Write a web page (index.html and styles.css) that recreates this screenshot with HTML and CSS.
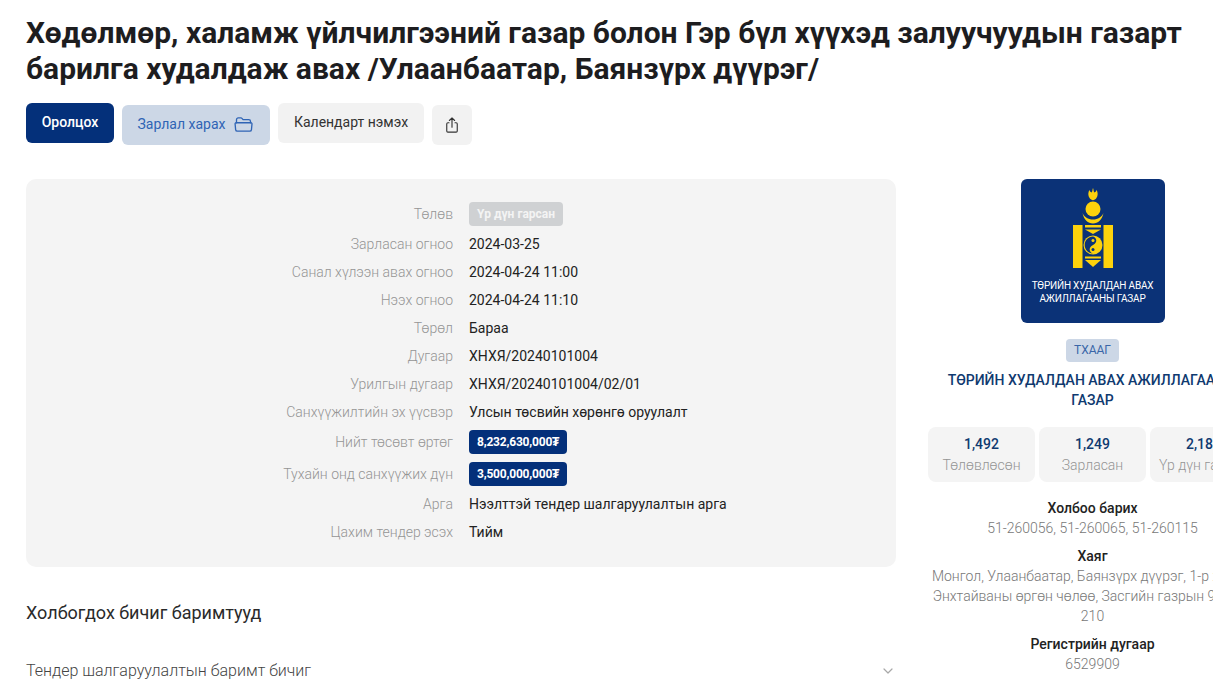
FILE: index.html
```html
<!DOCTYPE html>
<html lang="mn">
<head>
    <meta charset="UTF-8">
    <meta name="viewport" content="width=device-width, initial-scale=1.0">
    <title>Тендер</title>
    <link rel="stylesheet" href="styles.css">
</head>
<body>

<div class="page">
    <h1 class="title">Хөдөлмөр, халамж үйлчилгээний газар болон Гэр бүл хүүхэд залуучуудын газарт барилга худалдаж авах /Улаанбаатар, Баянзүрх дүүрэг/</h1>

    <div class="actions">
        <button class="btn btn-primary">Оролцох</button>
        <button class="btn btn-light low">
            Зарлал харах
            <svg class="btn-icon" viewBox="0 0 24 24" fill="none" stroke="currentColor" stroke-width="1.5" stroke-linecap="round" stroke-linejoin="round">
                <path d="M4 10V6.500A2 2 0 0 1 6 4.500h3.100a1.500 1.500 0 0 1 1.100.5l1.300 1.500H18a2 2 0 0 1 2 2V10"/>
                <path d="M3.500 10h17a1.200 1.200 0 0 1 1.200 1.300l-.6 6.500a2 2 0 0 1-2 1.800H5a2 2 0 0 1-2-1.800l-.6-6.500A1.200 1.200 0 0 1 3.500 10z"/>
            </svg>
        </button>
        <button class="btn btn-grey">Календарт нэмэх</button>
        <button class="btn btn-grey btn-square low">
            <svg class="share-icon" viewBox="0 0 24 24" fill="none" stroke="currentColor" stroke-width="1.5" stroke-linecap="round" stroke-linejoin="round">
                <path d="M8 9H6.500A1.500 1.500 0 0 0 5 10.500V20a1.500 1.500 0 0 0 1.500 1.500h11A1.500 1.500 0 0 0 19 20v-9.500A1.500 1.500 0 0 0 17.500 9H16"/>
                <path d="M12 15V2.500M8.500 6L12 2.500 15.500 6"/>
            </svg>
        </button>
    </div>

    <div class="columns">
        <div class="main">
            <div class="info-card">
                <div class="info-row tall"><span class="info-label">Төлөв</span><span class="badge badge-grey">Үр дүн гарсан</span></div>
                <div class="info-row"><span class="info-label">Зарласан огноо</span><span class="info-value">2024-03-25</span></div>
                <div class="info-row"><span class="info-label">Санал хүлээн авах огноо</span><span class="info-value">2024-04-24 11:00</span></div>
                <div class="info-row"><span class="info-label">Нээх огноо</span><span class="info-value">2024-04-24 11:10</span></div>
                <div class="info-row"><span class="info-label">Төрөл</span><span class="info-value">Бараа</span></div>
                <div class="info-row"><span class="info-label">Дугаар</span><span class="info-value">ХНХЯ/20240101004</span></div>
                <div class="info-row"><span class="info-label">Урилгын дугаар</span><span class="info-value">ХНХЯ/20240101004/02/01</span></div>
                <div class="info-row"><span class="info-label">Санхүүжилтийн эх үүсвэр</span><span class="info-value">Улсын төсвийн хөрөнгө оруулалт</span></div>
                <div class="info-row tall"><span class="info-label">Нийт төсөвт өртөг</span><span class="badge badge-blue">8,232,630,000₮</span></div>
                <div class="info-row tall"><span class="info-label">Тухайн онд санхүүжих дүн</span><span class="badge badge-blue">3,500,000,000₮</span></div>
                <div class="info-row"><span class="info-label">Арга</span><span class="info-value">Нээлттэй тендер шалгаруулалтын арга</span></div>
                <div class="info-row"><span class="info-label">Цахим тендер эсэх</span><span class="info-value">Тийм</span></div>
            </div>

            <h2 class="section-title">Холбогдох бичиг баримтууд</h2>

            <div class="accordion-row">
                <span>Тендер шалгаруулалтын баримт бичиг</span>
                <svg class="chevron" viewBox="0 0 12 12" fill="none" stroke="currentColor" stroke-width="1.2" stroke-linecap="round" stroke-linejoin="round"><path d="M2 4l4 4 4-4"/></svg>
            </div>
        </div>

        <div class="side">
            <div class="logo">
                <svg class="emblem" viewBox="0 0 40 82" fill="#fdd20c">
                    <path d="M20 1c.8 2 .3 3 1.400 4.500 1.200-.6 2-1.500 2.200-2.800 1.400 2.800 1.600 6-.3 8.500-.8 1.100-2 1.800-3.300 2-1.300-.2-2.500-.9-3.300-2-1.900-2.500-1.700-5.700-.3-8.500.2 1.300 1 2.200 2.200 2.800C19.700 4 19.200 3 20 1z"/>
                    <circle cx="20" cy="22" r="7.500"/>
                    <path d="M9.500 26c1.300 6.500 5.500 10.500 10.500 10.500S29.200 32.500 30.500 26c-1.800 4-5.500 6.500-10.500 6.500S11.300 30 9.500 26z"/>
                    <rect x="0" y="38" width="9.500" height="43"/>
                    <rect x="30.500" y="38" width="9.500" height="43"/>
                    <rect x="12" y="38" width="16" height="2.500"/>
                    <path d="M12 42.500h16L20 47z"/>
                    <circle cx="20" cy="58" r="9.500"/>
                    <rect x="12" y="69.500" width="16" height="2"/>
                    <path d="M12 73h16l-8 7z"/>
                    <path d="M20 49.500c3.800 1 5 6 0 8.500-5 2.500-3.800 7.500 0 8.500-4.700 0-8.300-3.800-8.300-8.500s3.600-8.500 8.300-8.500z" fill="#0b3277"/>
                    <circle cx="20" cy="53.500" r="1.500" fill="#fdd20c"/>
                    <circle cx="20" cy="62.500" r="1.500" fill="#0b3277"/>
                </svg>
                <div class="logo-text">ТӨРИЙН ХУДАЛДАН АВАХ<br>АЖИЛЛАГААНЫ ГАЗАР</div>
            </div>

            <span class="tag">ТХААГ</span>
            <div class="org-name">ТӨРИЙН ХУДАЛДАН АВАХ АЖИЛЛАГААНЫ ГАЗАР</div>

            <div class="stats">
                <div class="stat"><b>1,492</b><span>Төлөвлөсөн</span></div>
                <div class="stat"><b>1,249</b><span>Зарласан</span></div>
                <div class="stat"><b>2,183</b><span>Үр дүн гарсан</span></div>
            </div>

            <div class="contact-title first">Холбоо барих</div>
            <div class="contact-text">51-260056, 51-260065, 51-260115</div>
            <div class="contact-title">Хаяг</div>
            <div class="contact-text">Монгол, Улаанбаатар, Баянзүрх дүүрэг, 1-р хороо, Энхтайваны өргөн чөлөө, Засгийн газрын 9 байр, 210</div>
            <div class="contact-title">Регистрийн дугаар</div>
            <div class="contact-text">6529909</div>
        </div>
    </div>
</div>

</body>
</html>
```

FILE: styles.css
```css
html, body {
    margin: 0;
    height: 100%;
    overflow: hidden;
}
body {
    font-family: Roboto, "Liberation Sans", sans-serif;
    font-size: 14px;
    color: #222;
    background-color: #fff;
}
.page {
    padding: 15px 0 0 26px;
    width: 1231px;
    box-sizing: border-box;
}
.title {
    margin: 0;
    width: 1170px;
    font-size: 30px;
    line-height: 36px;
    font-weight: 700;
    color: #1d1d1f;
}

/* top buttons */
.actions {
    display: flex;
    align-items: flex-start;
    gap: 8px;
    margin-top: 16px;
}
.btn {
    display: flex;
    align-items: center;
    justify-content: center;
    height: 40px;
    border: none;
    border-radius: 6px;
    padding: 0 0 2px;
    font-family: inherit;
    font-size: 14px;
}
.low {
    margin-top: 2px;
}
.btn-primary {
    width: 88px;
    background-color: #04307a;
    color: #fff;
    font-weight: 500;
}
.btn-light {
    width: 148px;
    gap: 8px;
    background-color: #ccd7e6;
    color: #2f64b5;
}
.btn-grey {
    width: 146px;
    background-color: #f2f2f2;
    color: #333;
}
.btn-square {
    width: 40px;
    padding: 0;
}
.btn-icon {
    width: 21px;
    height: 21px;
}
.share-icon {
    width: 18px;
    height: 18px;
}

.columns {
    display: flex;
    align-items: flex-start;
    gap: 32px;
    margin-top: 34px;
}
.main {
    width: 870px;
    flex-shrink: 0;
}

/* info card */
.info-card {
    padding: 19px 0 21px;
    border-radius: 10px;
    background-color: #f4f4f4;
}
.info-row {
    display: flex;
    align-items: center;
    gap: 16px;
    height: 28px;
}
.info-row.tall {
    height: 32px;
}
.info-label {
    width: 427px;
    text-align: right;
    color: #949494;
    font-weight: 300;
}
.info-value {
    color: #222;
}
.badge {
    display: flex;
    align-items: center;
    height: 24px;
    padding: 0 8px;
    border-radius: 4px;
    font-size: 12px;
    font-weight: 700;
}
.badge-grey {
    background-color: #cfd1d3;
    color: #f4f4f4;
}
.badge-blue {
    background-color: #04307a;
    color: #fff;
    letter-spacing: -0.2px;
}

.section-title {
    margin: 35px 0 0;
    font-size: 18px;
    line-height: 22px;
    font-weight: 400;
    color: #2a2a2a;
}
.accordion-row {
    display: flex;
    align-items: center;
    justify-content: space-between;
    margin-top: 36px;
    font-size: 16px;
    line-height: 22px;
    font-weight: 300;
    color: #444;
}
.chevron {
    width: 12px;
    height: 12px;
    margin-right: 2px;
    color: #a8a8a8;
}

/* right column */
.side {
    display: flex;
    flex-direction: column;
    align-items: center;
    width: 329px;
    flex-shrink: 0;
    text-align: center;
}
.logo {
    display: flex;
    flex-direction: column;
    align-items: center;
    width: 144px;
    height: 144px;
    box-sizing: border-box;
    padding-top: 8px;
    border-radius: 6px;
    background-color: #0b3277;
}
.emblem {
    width: 40px;
    height: 82px;
    flex-shrink: 0;
}
.logo-text {
    margin-top: 10px;
    font-size: 10px;
    line-height: 13px;
    letter-spacing: -0.2px;
    color: #fff;
}
.tag {
    margin-top: 16px;
    padding: 0 8px;
    height: 23px;
    line-height: 23px;
    border-radius: 4px;
    font-size: 12px;
    background-color: #ccd7e6;
    color: #3a66a8;
}
.org-name {
    margin-top: 8px;
    line-height: 20px;
    font-weight: 500;
    color: #0f3a70;
}
.stats {
    display: flex;
    gap: 4px;
    width: 100%;
    margin-top: 17px;
}
.stat {
    display: flex;
    flex-direction: column;
    align-items: center;
    justify-content: center;
    gap: 2px;
    flex: 1;
    height: 55px;
    border-radius: 8px;
    background-color: #f4f4f4;
    white-space: nowrap;
}
.stat b {
    font-weight: 500;
    line-height: 18px;
    color: #0f3a70;
}
.stat span {
    line-height: 20px;
    color: #949494;
    font-weight: 300;
}
.contact-title {
    margin-top: 8px;
    line-height: 20px;
    font-weight: 500;
    color: #222;
}
.contact-title.first {
    margin-top: 16px;
}
.contact-text {
    line-height: 20px;
    font-weight: 300;
    color: #777;
}
```
